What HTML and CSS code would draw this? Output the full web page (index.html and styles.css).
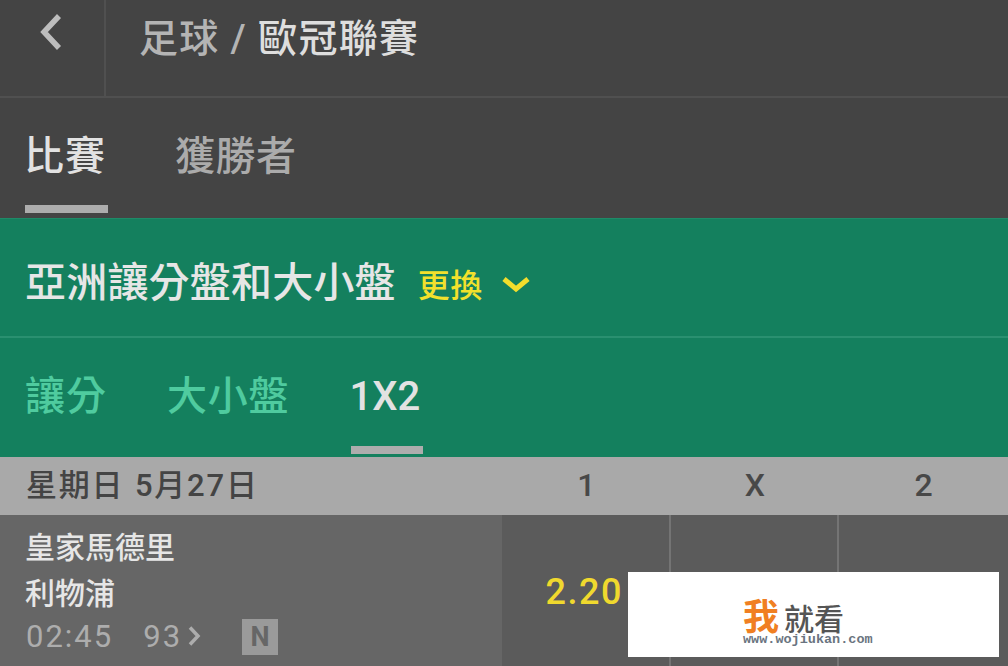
FILE: index.html
```html
<!DOCTYPE html>
<html lang="zh-Hant">
<head>
<meta charset="utf-8">
<title>歐冠聯賽</title>
<link rel="stylesheet" href="styles.css">
</head>
<body>
<div class="page">
  <header class="topbar">
    <div class="back">
      <svg class="back-icon" width="24" height="38" viewBox="0 0 24 38"><path d="M20 3 L5 19 L20 35" fill="none" stroke="#bdbdbd" stroke-width="5.5"/></svg>
    </div>
    <div class="crumb"><span class="crumb-dim">足球 / </span><span class="crumb-main">歐冠聯賽</span></div>
  </header>
  <nav class="tabs">
    <div class="tab tab-active">比賽</div>
    <div class="tab">獲勝者</div>
  </nav>
  <section class="green">
    <div class="market">
      <span class="market-name">亞洲讓分盤和大小盤</span>
      <span class="change">更換</span>
      <svg class="chev" width="30" height="18" viewBox="0 0 30 18"><path d="M3 3 L15 13 L27 3" fill="none" stroke="#f2dd2c" stroke-width="5"/></svg>
    </div>
    <div class="subtabs">
      <div class="subtab">讓分</div>
      <div class="subtab subtab-mid">大小盤</div>
      <div class="subtab subtab-active">1X2</div>
    </div>
  </section>
  <div class="datebar">
    <div class="date">星期日 5月27日</div>
    <div class="col">1</div>
    <div class="col">X</div>
    <div class="col">2</div>
  </div>
  <div class="event">
    <div class="teams">
      <div class="team">皇家馬德里</div>
      <div class="team">利物浦</div>
      <div class="meta">
        <span class="time">02:45</span>
        <span class="count">93</span>
        <svg class="more" width="14" height="22" viewBox="0 0 14 22"><path d="M3 2.500 L11 11 L3 19.500" fill="none" stroke="#adadad" stroke-width="3.500"/></svg>
        <span class="badge">N</span>
      </div>
    </div>
    <div class="odd"><span class="price">2.20</span></div>
    <div class="odd"></div>
    <div class="odd"></div>
  </div>
  <div class="stamp">
    <div class="stamp-logo"><span class="stamp-wo">我</span><span class="stamp-rest">就看</span></div>
    <div class="stamp-url">www.wojiukan.com</div>
  </div>
</div>
</body>
</html>
```
FILE: styles.css
```css
* { box-sizing: border-box; }
html, body { margin: 0; padding: 0; }
body {
  width: 1008px;
  height: 666px;
  overflow: hidden;
  background: #444;
  font-family: Roboto, "Noto Sans CJK TC", sans-serif;
  font-weight: 500;
}
.page { position: relative; width: 1008px; height: 666px; overflow: hidden; }

.topbar { display: flex; height: 98px; background: #444; border-bottom: 2px solid #505050; }
.back { width: 106px; border-right: 2px solid #505050; padding: 13px 0 0 39px; }
.back-icon { display: block; }
.crumb { padding: 13px 0 0 33px; font-size: 39px; line-height: 52px; letter-spacing: 1.300px; white-space: pre; }
.crumb-dim { color: #b4b4b4; }
.crumb-main { color: #dedede; }

.tabs { display: flex; gap: 67px; height: 120px; padding-left: 25px; background: #444; }
.tab { height: 115px; padding-top: 30px; font-size: 40px; line-height: 58px; letter-spacing: 0.500px; color: #ababab; }
.tab-active { width: 83px; color: #e2e2e2; border-bottom: 8px solid #adadad; letter-spacing: 1px; text-indent: -1px; }

.green { height: 239px; background: #14805e; border-top: 1px solid #1f8a68; }
.market { display: flex; align-items: center; height: 119px; padding: 10px 0 0 25px; border-bottom: 2px solid #2a9070; }
.market-name { font-size: 41px; line-height: 56px; letter-spacing: 0.200px; color: #e6e6e6; }
.change { margin-left: 22px; font-size: 32px; letter-spacing: 0.500px; color: #f2e12c; }
.chev { margin: 4px 0 0 18px; }
.subtabs { display: flex; gap: 60px; height: 118px; padding-left: 25px; }
.subtab { height: 116px; padding-top: 30px; font-size: 40px; line-height: 58px; letter-spacing: 1px; color: #4fcb9f; }
.subtab-mid { letter-spacing: 0.800px; }
.subtab-active { width: 72px; margin-left: 2px; color: #e2e2e2; border-bottom: 8px solid #adadad; letter-spacing: 0; text-indent: -2px; }

.datebar { display: flex; align-items: center; height: 58px; background: #a9a9a9; color: #444; font-size: 31px; }
.date { width: 502px; padding: 0 0 8px 26px; word-spacing: 1px; letter-spacing: 1.800px; }
.col { width: 168.600px; padding: 0 0 3px 0; text-align: center; font-weight: 500; font-size: 32px; color: #484848; }

.event { display: flex; height: 153px; background: #666; }
.teams { width: 502px; padding: 10px 0 0 25px; color: #e6e6e6; font-size: 30px; }
.team { height: 46px; line-height: 46px; }
.meta { display: flex; align-items: center; height: 44px; margin-top: -3px; padding-left: 1px; color: #adadad; font-size: 31px; font-weight: 400; letter-spacing: 2px; }
.count { margin-left: 30px; }
.more { margin-left: 5px; }
.badge { display: flex; align-items: center; justify-content: center; width: 36px; height: 36px; margin: 0 0 -1px 41px; background: #9a9a9a; color: #666; font-weight: 700; font-size: 27px; letter-spacing: 0; }
.odd { width: 168.600px; background: #5b5b5b; border-right: 2px solid #747474; text-align: center; padding-top: 52px; }
.odd:last-child { border-right: 0; }
.price { font-size: 36px; font-weight: 500; line-height: 50px; letter-spacing: 1.500px; color: #f0d92e; margin-left: -2px; }

.stamp { position: absolute; left: 628px; top: 572px; display: flex; flex-direction: column; align-items: flex-start; width: 371px; height: 85px; padding: 28px 0 0 115px; background: #fff; }
.stamp-logo { display: flex; align-items: baseline; height: 33px; line-height: 36px; }
.stamp-wo { font-size: 36px; font-weight: 700; color: #f07f22; }
.stamp-rest { margin-left: 5px; font-size: 30px; color: #555; }
.stamp-url { font-family: "Liberation Mono", monospace; font-size: 13.500px; line-height: 14px; font-weight: 700; color: #6a7480; }
```
